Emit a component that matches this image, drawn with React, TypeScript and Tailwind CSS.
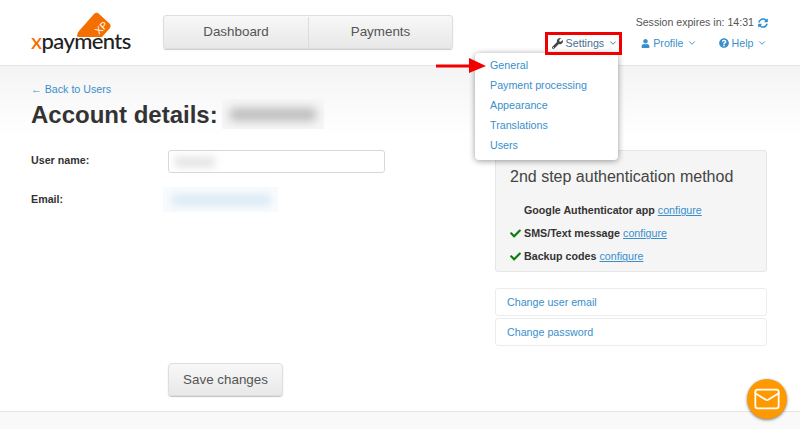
import { ChevronDown, Mail } from 'lucide-react'
import { FaCheck, FaQuestionCircle, FaSyncAlt, FaUser, FaWrench } from 'react-icons/fa'

const settingsItems = ['General', 'Payment processing', 'Appearance', 'Translations', 'Users']

function Logo() {
  return (
    <div className="relative h-[48px] w-[101px] shrink-0">
      <svg className="absolute left-[46px] top-0" width="36" height="26" viewBox="0 0 36 26">
        <path d="M1 24 Q1 21 3 19 L18 2 Q20 0 22 1 L34 12 Q35.5 14 34 16 L26 25 L3 25 Q1 25 1 24 Z" fill="#f37000" />
        <text x="23" y="23" fontSize="10" fill="#fff" fontFamily="Liberation Sans, sans-serif" transform="rotate(-45 23 23)">XP</text>
      </svg>
      <div className="absolute left-[1px] top-[15px] font-['Lato',sans-serif] text-[22px] font-medium leading-[28px] tracking-[-0.6px] text-[#222]">
        <span className="text-[#f37000]">x</span>payments
      </div>
    </div>
  )
}

function TopLink({ icon, label, dark }: { icon: React.ReactNode; label: string; dark?: boolean }) {
  return (
    <span className={dark ? 'flex items-center text-[10.7px] text-[#47708f]' : 'flex items-center text-[10.7px] text-[#3a8fcb]'}>
      {icon}
      <span className="ml-[3px]">{label}</span>
      <ChevronDown className="ml-[3.5px] size-[10px]" strokeWidth={2.2} />
    </span>
  )
}

function Header() {
  return (
    <header className="relative z-10 flex h-[66px] border-b border-[#e5e5e5] bg-white pl-[30px]">
      <div className="pt-[12px]">
        <Logo />
      </div>
      <nav className="ml-[32px] mt-[15px] flex h-[34px] w-[290px] rounded-[3px] border border-[#dedede] bg-gradient-to-b from-[#f8f8f8] to-[#e8e8e8] pt-[1px] text-[13.4px] text-[#555] shadow-[0_1px_1px_rgba(0,0,0,0.2)]">
        <span className="flex w-[145px] items-center justify-center border-r border-[#dcdcdc]">Dashboard</span>
        <span className="flex flex-1 items-center justify-center">Payments</span>
      </nav>
      <div className="ml-auto flex flex-col items-end pr-[32px] pt-[16px]">
        <div className="flex h-[14px] items-center text-[10.6px] text-[#555]">
          Session expires in: 14:31
          <FaSyncAlt className="ml-[4px] size-[10px] text-[#2f8fd0]" />
        </div>
        <div className="mt-[5px] flex h-[16px] items-center">
          <TopLink dark icon={<FaWrench className="size-[11px] text-[#444]" />} label="Settings" />
          <span className="ml-[23.5px]">
            <TopLink icon={<FaUser className="size-[9px]" />} label="Profile" />
          </span>
          <span className="ml-[21.5px] mr-[1px]">
            <TopLink icon={<FaQuestionCircle className="size-[10px]" />} label="Help" />
          </span>
        </div>
      </div>
    </header>
  )
}

function SettingsMenu() {
  return (
    <div className="absolute left-[475px] top-[53px] z-20 h-[107px] w-[143px] rounded-[4px] bg-white pl-[15px] pt-[2px] shadow-[0_1px_6px_rgba(0,0,0,0.4)]">
      {settingsItems.map((item) => (
        <div key={item} className="h-[20px] text-[10.7px] leading-[20px] text-[#3a8fcb]">
          {item}
        </div>
      ))}
    </div>
  )
}

function Annotations() {
  return (
    <>
      <div className="absolute left-[545px] top-[32px] z-30 h-[23px] w-[77px] border-[3px] border-[#f00000]" />
      <svg className="absolute left-[435px] top-[55px] z-30" width="52" height="20" viewBox="0 0 52 20">
        <path d="M1 9.5 H35 V12.5 H1 Z M34 3 L51 11 L34 18 Z" fill="#f00000" />
      </svg>
    </>
  )
}

function AuthRow({ label, checked }: { label: string; checked?: boolean }) {
  return (
    <div className="flex h-[23px] items-center text-[10.7px]">
      <span className="w-[14px]">{checked ? <FaCheck className="size-[11px] text-[#0d7d0d]" /> : null}</span>
      <b className="text-[#333]">{label}</b>
      <a className="ml-[3px] text-[#3a8fcb] underline">configure</a>
    </div>
  )
}

function AccountForm() {
  return (
    <section className="w-[495px] shrink-0 pl-[31px] pt-[16px]">
      <a className="block h-[14px] text-[10.7px] leading-[14px] text-[#3a8fcb]">← Back to Users</a>
      <div className="mt-[2px] flex h-[32px] items-center">
        <h1 className="pt-[1px] text-[24px] font-bold leading-[32px] text-[#333]">Account details:</h1>
        <div className="ml-[4px] flex h-[30px] w-[102px] items-center justify-center bg-[#f6f6f6]">
          <div className="h-[13px] w-[86px] rounded-[3px] bg-[#bdbdbd] blur-[5px]" />
        </div>
      </div>
      <div className="mt-[20px] flex h-[23px] items-center">
        <label className="w-[137px] pb-[2px] text-[10.7px] font-bold text-[#333]">User name:</label>
        <div className="flex h-[23px] w-[217px] items-center rounded-[3px] border border-[#d8d8d8] bg-white pl-[6px]">
          <div className="h-[10px] w-[40px] bg-[#e2e2e2] blur-[4px]" />
        </div>
      </div>
      <div className="mt-[15px] flex h-[23px] items-center">
        <label className="w-[137px] text-[10.7px] font-bold text-[#333]">Email:</label>
        <div className="-ml-[5px] flex h-[25px] w-[115px] items-center justify-center bg-[#f8fbfd]">
          <div className="h-[10px] w-[98px] bg-[#d8e8f4] blur-[4px]" />
        </div>
      </div>
      <button
        type="button"
        className="ml-[137px] mt-[152px] h-[33px] w-[115px] rounded-[4px] border border-[#dedede] bg-gradient-to-b from-[#f8f8f8] to-[#e8e8e8] pt-[1px] text-[13.4px] text-[#555] shadow-[0_1px_1px_rgba(0,0,0,0.25)]"
      >
        Save changes
      </button>
    </section>
  )
}

function SidePanel() {
  return (
    <aside className="w-[272px] shrink-0 pt-[84px]">
      <div className="h-[122px] rounded-[3px] border border-[#e6e6e6] bg-[#f5f5f5] pl-[14px] pt-[14px]">
        <h2 className="h-[24px] text-[16px] leading-[24px] text-[#444]">2nd step authentication method</h2>
        <div className="mt-[10px]">
          <AuthRow label="Google Authenticator app" />
          <AuthRow label="SMS/Text message" checked />
          <AuthRow label="Backup codes" checked />
        </div>
      </div>
      <a className="mt-[16px] block h-[28px] rounded-[3px] border border-[#ececec] pl-[11px] text-[10.7px] leading-[26px] text-[#3a8fcb]">
        Change user email
      </a>
      <a className="mt-[2px] block h-[28px] rounded-[3px] border border-[#ececec] pl-[11px] text-[10.7px] leading-[27px] text-[#3a8fcb]">
        Change password
      </a>
    </aside>
  )
}

export default function App() {
  return (
    <div className="relative h-[429px] w-[800px] overflow-hidden bg-white font-['Liberation_Sans',Arial,sans-serif]">
      <Header />
      <SettingsMenu />
      <Annotations />
      <main className="flex h-[345px] bg-gradient-to-b from-[#f4f4f4] to-white to-[70px]">
        <AccountForm />
        <SidePanel />
      </main>
      <footer className="h-[18px] border-t border-[#e5e5e5] bg-[#f9f9f9]" />
      <button
        type="button"
        className="absolute left-[747px] top-[379px] z-30 flex size-[40px] items-center justify-center rounded-full bg-[#ff9900] text-white shadow-[0_1px_3px_rgba(0,0,0,0.5)]"
      >
        <Mail className="size-[28px]" strokeWidth={1.5} />
      </button>
    </div>
  )
}
